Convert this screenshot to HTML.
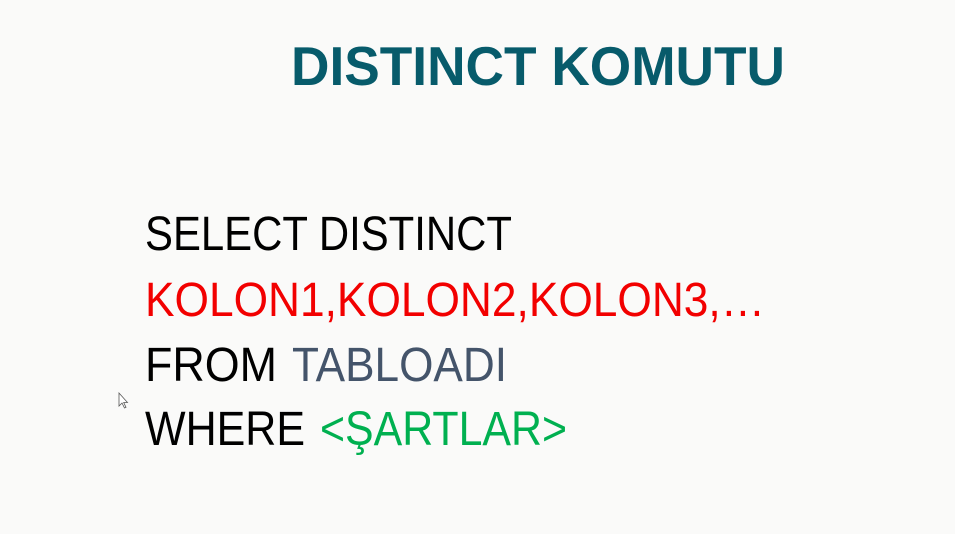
<!DOCTYPE html>
<html><head><meta charset="utf-8"><style>
html,body{margin:0;padding:0;background:#fafaf9;}
svg{display:block;}
</style></head><body>
<svg width="955" height="534" viewBox="0 0 955 534" xmlns="http://www.w3.org/2000/svg">
<rect width="955" height="534" fill="#fafaf9"/>
<text x="291" y="85" font-family="Liberation Sans, sans-serif" font-weight="bold" font-size="55" fill="#075b6b" textLength="494" lengthAdjust="spacingAndGlyphs">DISTINCT KOMUTU</text>
<g font-family="Liberation Sans, sans-serif" font-size="48">
<text x="145" y="250" fill="#000" textLength="367" lengthAdjust="spacingAndGlyphs">SELECT DISTINCT</text>
<text x="145" y="316" fill="#f20000" textLength="620" lengthAdjust="spacingAndGlyphs">KOLON1,KOLON2,KOLON3,…</text>
<text x="145" y="381" fill="#000" textLength="132" lengthAdjust="spacingAndGlyphs">FROM</text>
<text x="292" y="381" fill="#44546a" textLength="215" lengthAdjust="spacingAndGlyphs">TABLOADI</text>
<text x="145" y="445" fill="#000" textLength="160" lengthAdjust="spacingAndGlyphs">WHERE</text>
<text x="320" y="445" fill="#00b050" textLength="247" lengthAdjust="spacingAndGlyphs">&lt;ŞARTLAR&gt;</text>
</g>
<path d="M119 393 L119 406 L122 403 L124.5 408 L126 407.3 L123.7 402.5 L127.5 402.5 Z" fill="#fff" stroke="#555" stroke-width="0.8"/>
</svg>
</body></html>
